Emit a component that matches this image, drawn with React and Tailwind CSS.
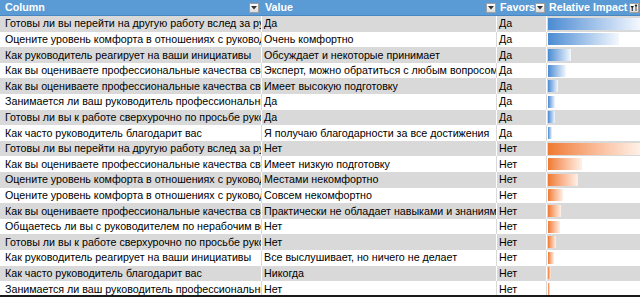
import React from "react";

const rows = [
  ["Готовы ли вы перейти на другую работу вслед за руководителем", "Да", "Да", "b", 100],
  ["Оцените уровень комфорта в отношениях с руководителем", "Очень комфортно", "Да", "b", 77],
  ["Как руководитель реагирует на ваши инициативы", "Обсуждает и некоторые принимает", "Да", "b", 25],
  ["Как вы оцениваете профессиональные качества своего руководителя", "Эксперт, можно обратиться с любым вопросом", "Да", "b", 20],
  ["Как вы оцениваете профессиональные качества своего руководителя", "Имеет высокую подготовку", "Да", "b", 11],
  ["Занимается ли ваш руководитель профессиональным развитием", "Да", "Да", "b", 8],
  ["Готовы ли вы к работе сверхурочно по просьбе руководителя", "Да", "Да", "b", 8],
  ["Как часто руководитель благодарит вас", "Я получаю благодарности за все достижения", "Да", "b", 4],
  ["Готовы ли вы перейти на другую работу вслед за руководителем", "Нет", "Нет", "o", 100],
  ["Как вы оцениваете профессиональные качества своего руководителя", "Имеет низкую подготовку", "Нет", "o", 37],
  ["Оцените уровень комфорта в отношениях с руководителем", "Местами некомфортно", "Нет", "o", 33],
  ["Оцените уровень комфорта в отношениях с руководителем", "Совсем некомфортно", "Нет", "o", 16],
  ["Как вы оцениваете профессиональные качества своего руководителя", "Практически не обладает навыками и знаниями", "Нет", "o", 14],
  ["Общаетесь ли вы с руководителем по нерабочим вопросам", "Нет", "Нет", "o", 13],
  ["Готовы ли вы к работе сверхурочно по просьбе руководителя", "Нет", "Нет", "o", 9],
  ["Как руководитель реагирует на ваши инициативы", "Все выслушивает, но ничего не делает", "Нет", "o", 7],
  ["Как часто руководитель благодарит вас", "Никогда", "Нет", "o", 3],
  ["Занимается ли ваш руководитель профессиональным развитием", "Нет", "Нет", "o", 2],
];

function FilterBtn({ funnel }) {
  return (
    <div className="w-[10px] h-[10px] bg-linear-to-b from-white to-[#dcdcdc] border border-[#a0a0a0] flex items-center justify-center shrink-0">
      {funnel ? (
        <svg width="8" height="8" viewBox="0 0 8 8">
          <path d="M0.5 2 L4 2 L2.8 4 L2.8 7 L1.7 7 L1.7 4 Z" fill="#222" />
          <path d="M4.5 1 L7.5 1 L6 3 Z" fill="#222" />
          <rect x="5.6" y="0" width="0.8" height="7" fill="#222" />
        </svg>
      ) : (
        <svg width="6" height="4" viewBox="0 0 6 4">
          <path d="M0 0 L6 0 L3 3.5 Z" fill="#333" />
        </svg>
      )}
    </div>
  );
}

export default function App() {
  return (
    <div
      className="relative w-[640px] h-[298px] overflow-hidden bg-white text-[10.7px] leading-none text-black"
      style={{ fontFamily: '"Liberation Sans", Arial, sans-serif' }}
    >
      <div className="flex h-[16px] bg-[#5b9bd5] text-white font-bold border-b border-[#4a86c0]">
        <div className="w-[262px] pl-[5px] pr-[3px] flex items-center justify-between">
          <span>Column</span>
          <FilterBtn />
        </div>
        <div className="w-[235px] pl-[3px] pr-[1px] flex items-center justify-between">
          <span>Value</span>
          <FilterBtn />
        </div>
        <div className="w-[50px] pl-[3px] pr-[2px] flex items-center justify-between">
          <span>Favors</span>
          <FilterBtn />
        </div>
        <div className="flex-1 pl-[2px] pr-[1px] flex items-center justify-between">
          <span className="whitespace-nowrap">Relative Impact</span>
          <FilterBtn funnel />
        </div>
      </div>
      {rows.map(([q, v, f, c, w], i) => {
        const gray = i % 2 === 0;
        const sep = gray ? "border-white" : "border-[#d9d9d9]";
        return (
          <div
            key={i}
            className={`flex h-[15.6px] ${gray ? "bg-[#d9d9d9]" : "bg-white"}`}
          >
            <div className={`w-[262px] pl-[5px] flex items-center overflow-hidden whitespace-nowrap border-r ${sep}`}>
              {q}
            </div>
            <div className={`w-[235px] pl-[2px] flex items-center overflow-hidden whitespace-nowrap border-r ${sep}`}>
              {v}
            </div>
            <div className={`w-[50px] pl-[2px] flex items-center overflow-hidden whitespace-nowrap border-r ${sep}`}>
              {f}
            </div>
            <div className="flex-1 pl-[1px] flex items-center overflow-hidden">
              <div
                className={`h-[12px] ${
                  c === "b"
                    ? "bg-linear-to-r from-[#4a8bd2] to-[#f4f8fd]"
                    : "bg-linear-to-r from-[#ee7a2e] to-[#fdf1e8]"
                }`}
                style={{ width: `${w}%` }}
              />
            </div>
          </div>
        );
      })}
      <div className="absolute left-0 right-0 bottom-[1px] h-[2px] bg-[#1a1a1a]" />
    </div>
  );
}
